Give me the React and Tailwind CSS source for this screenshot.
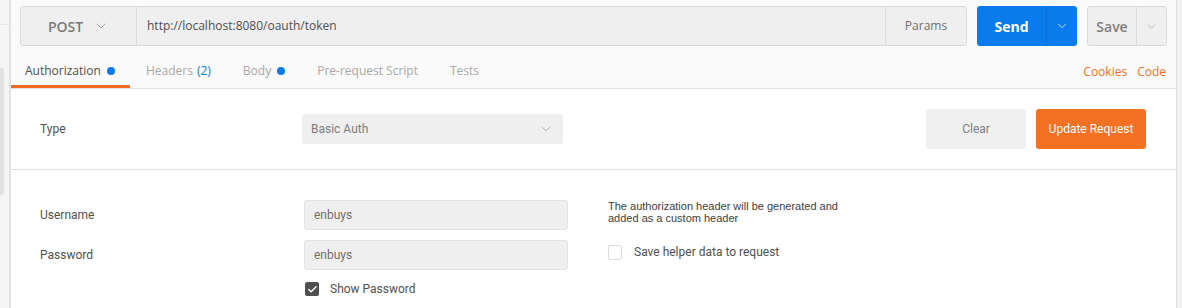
import { ChevronDown, Check } from "lucide-react";

const TABS = [
  { label: "Authorization", active: true, dot: true },
  { label: "Headers", count: "(2)" },
  { label: "Body", dot: true },
  { label: "Pre-request Script" },
  { label: "Tests" },
];

function Dot() {
  return <span className="ml-[6px] inline-block h-[8px] w-[8px] rounded-full bg-[#097bed]" />;
}

export default function App() {
  return (
    <div className="flex h-[308px] w-[1182px] overflow-hidden bg-white font-['Open_Sans',sans-serif]">
      {/* left sidebar edge */}
      <div className="flex w-[9px] shrink-0 flex-col bg-[#f5f5f5]">
        <div className="h-[25px] border-b border-[#e4e4e4]" />
        <div className="mt-[43px] h-[127px] w-[4px] rounded-r-[3px] bg-[#e2e2e2]" />
      </div>
      <div className="w-[2px] shrink-0 bg-[#e2e2e2]" />

      <div className="flex min-w-0 flex-1 flex-col">
        {/* request bar */}
        <div className="bg-[#fafafa]">
          <div className="flex h-[55px] items-start gap-[10px] pl-[9px] pr-[9px] pt-[6px]">
            <div className="flex h-[40px] flex-1 rounded-[3px] border border-[#dadada] bg-[#efefef]">
              <div className="flex w-[116px] items-center justify-center gap-[10px] border-r border-[#dadada] text-[14px] font-semibold text-[#7a7a7a]">
                POST
                <ChevronDown className="h-[16px] w-[16px] text-[#a5a5a5]" strokeWidth={1.5} />
              </div>
              <div className="flex flex-1 items-center pl-[10px] text-[12px] text-[#505050]">
                http://localhost:8080/oauth/token
              </div>
              <div className="flex w-[81px] items-center justify-center border-l border-[#dadada] text-[12px] text-[#707070]">
                Params
              </div>
            </div>
            <div className="flex h-[40px] w-[100px] rounded-[3px] bg-[#097bed] text-white">
              <div className="flex flex-1 items-center justify-center text-[14px] font-bold">Send</div>
              <div className="flex w-[31px] items-center justify-center border-l border-[#0a6fd4]">
                <ChevronDown className="h-[14px] w-[14px] text-[#cfe3fb]" strokeWidth={1.5} />
              </div>
            </div>
            <div className="flex h-[40px] w-[80px] rounded-[3px] border border-[#dadada] bg-[#efefef]">
              <div className="flex flex-1 items-center justify-center text-[14px] font-semibold text-[#808080]">Save</div>
              <div className="flex w-[30px] items-center justify-center border-l border-[#dadada]">
                <ChevronDown className="h-[13px] w-[13px] text-[#b0b0b0]" strokeWidth={1.5} />
              </div>
            </div>
          </div>

          {/* tabs */}
          <div className="flex h-[34px] items-stretch border-b border-[#e0e0e0] pr-[10px] text-[12px]">
            {TABS.map((t) => (
              <div
                key={t.label}
                className={`flex items-center ${
                  t.active
                    ? "border-b-[3px] border-[#f26b21] pl-[14px] pr-[15px] pt-[1px] text-[#505050]"
                    : "px-[16px] pb-[2px] text-[#a8a8a8]"
                }`}
              >
                {t.label}
                {t.count && <span className="ml-[4px] text-[#097bed]">{t.count}</span>}
                {t.dot && <Dot />}
              </div>
            ))}
            <div className="ml-auto flex items-center gap-[10px] text-[#f47023]">
              <span>Cookies</span>
              <span>Code</span>
            </div>
          </div>
        </div>

        {/* auth type row */}
        <div className="flex h-[81px] items-center border-b border-[#dedede] pl-[29px] pr-[30px] font-['Roboto',sans-serif] text-[12px]">
          <div className="w-[262px] text-[#505050]">Type</div>
          <div className="flex h-[30px] w-[261px] items-center justify-between rounded-[3px] bg-[#efefef] pl-[9px] pr-[9px] text-[#7d7d7d]">
            Basic Auth
            <ChevronDown className="h-[16px] w-[16px] text-[#b5b5b5]" strokeWidth={1.5} />
          </div>
          <div className="ml-auto flex gap-[10px]">
            <div className="flex h-[40px] w-[100px] items-center justify-center rounded-[3px] bg-[#f0f0f0] text-[#808080]">
              Clear
            </div>
            <div className="flex h-[40px] w-[110px] items-center justify-center rounded-[3px] bg-[#f47023] text-white">
              Update Request
            </div>
          </div>
        </div>

        {/* credentials */}
        <div className="flex pl-[29px] pt-[30px] font-['Roboto',sans-serif] text-[12px] text-[#505050]">
          <div className="flex w-[264px] flex-col">
            <div className="flex h-[30px] items-center">Username</div>
            <div className="mt-[10px] flex h-[30px] items-center">Password</div>
          </div>
          <div className="flex w-[264px] flex-col">
            <div className="flex h-[30px] items-center rounded-[3px] border border-[#e2e2e2] bg-[#efefef] pl-[9px] text-[#707070]">
              enbuys
            </div>
            <div className="mt-[10px] flex h-[30px] items-center rounded-[3px] border border-[#e2e2e2] bg-[#efefef] pl-[9px] text-[#707070]">
              enbuys
            </div>
            <div className="mt-[10px] flex items-center gap-[11px] pl-[1px]">
              <span className="flex h-[14px] w-[14px] items-center justify-center rounded-[2px] bg-[#505050]">
                <Check className="h-[11px] w-[11px] text-white" strokeWidth={3} />
              </span>
              Show Password
            </div>
          </div>
          <div className="ml-[40px] flex flex-col">
            <div className="font-['Liberation_Sans',sans-serif] text-[11px] leading-[12px] text-[#404040]">
              The authorization header will be generated and
              <br />
              added as a custom header
            </div>
            <div className="mt-[19px] flex items-center gap-[12px]">
              <span className="h-[15px] w-[14px] rounded-[2px] border border-[#dcdcdc] bg-white" />
              Save helper data to request
            </div>
          </div>
        </div>
      </div>

      {/* right edge */}
      <div className="w-[6px] shrink-0 border-l border-[#e0e0e0] bg-[#f3f3f3]" />
    </div>
  );
}
